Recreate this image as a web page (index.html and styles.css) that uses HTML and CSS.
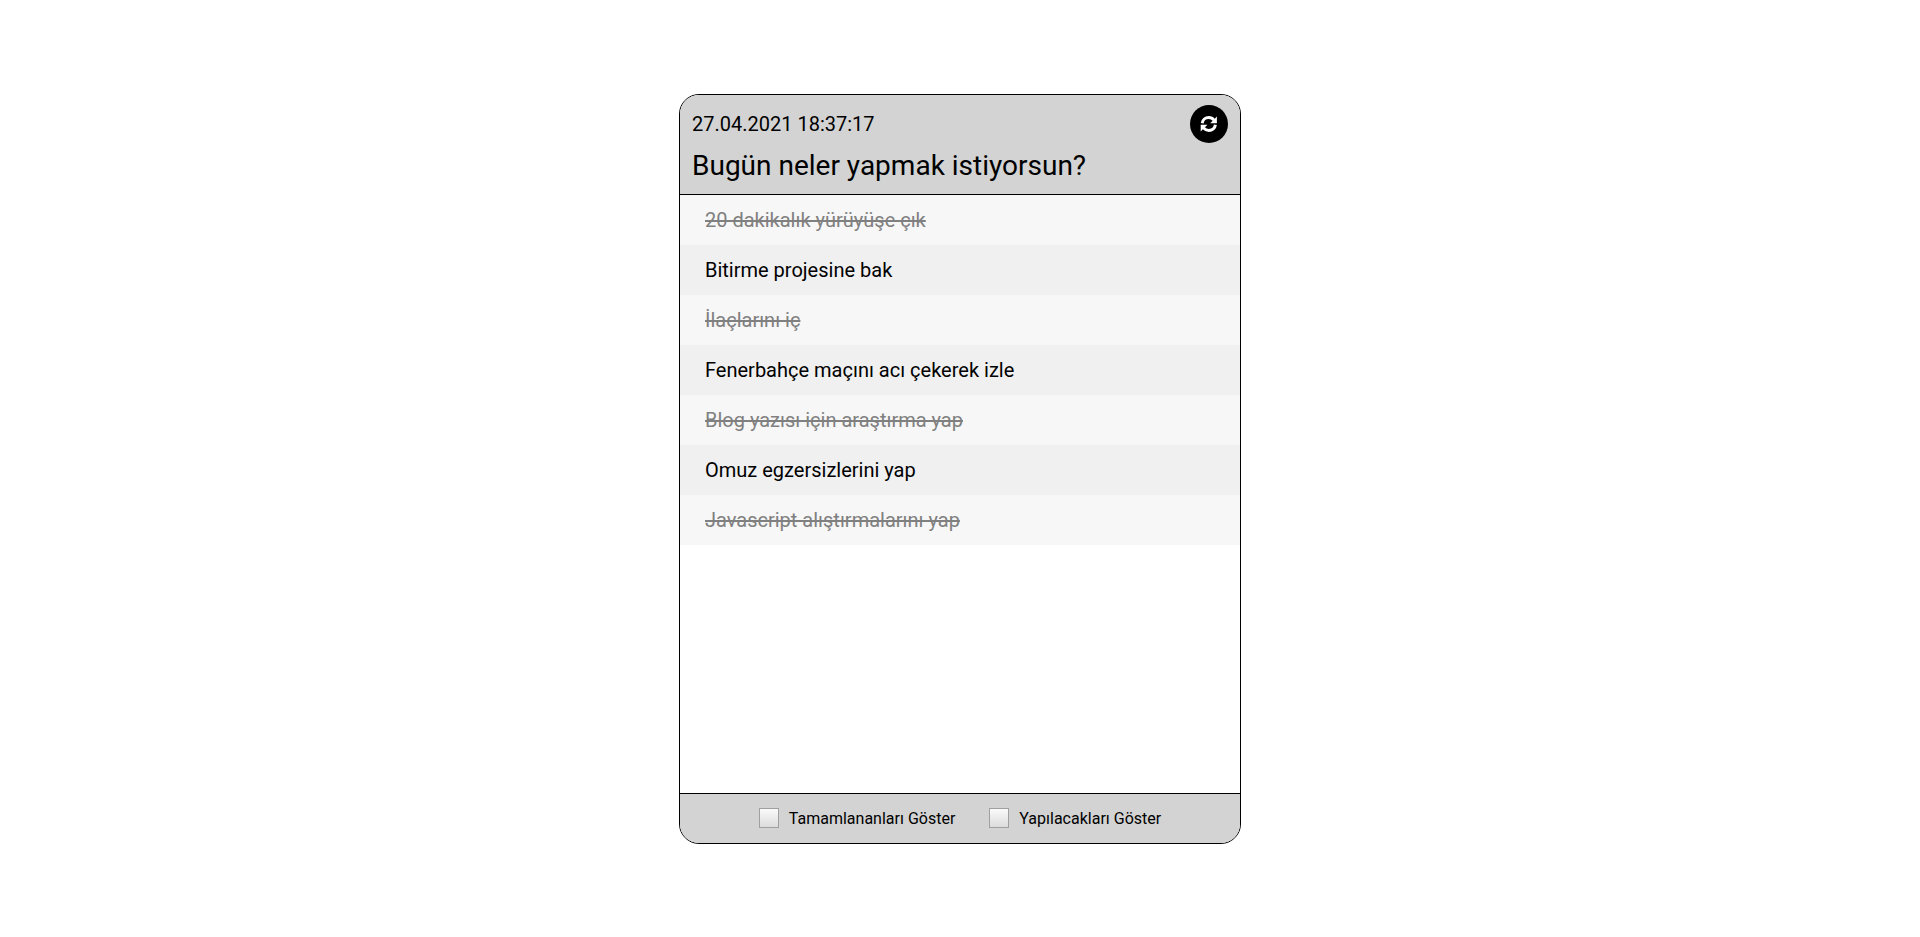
FILE: index.html
```html
<!DOCTYPE html>
<html lang="tr">
<head>
  <meta charset="utf-8">
  <meta name="viewport" content="width=device-width, initial-scale=1">
  <title>Yapılacaklar</title>
  <link rel="stylesheet" href="styles.css">
</head>
<body>
  <main class="card">
    <header class="card-header">
      <div class="header-top">
        <time class="clock" datetime="2021-04-27T18:37:17">27.04.2021 18:37:17</time>
        <button class="refresh" type="button" aria-label="Yenile">
          <svg class="refresh-icon" viewBox="0 0 18 18" aria-hidden="true">
            <path class="arc" d="M2.2 8.2C2.6 4.9 5.300 2.600 8.700 2.600C10.900 2.600 12.700 3.500 14 5.100"/>
            <path class="arc" d="M15.400 9.800C15 13.100 12.300 15.400 8.900 15.400C6.700 15.400 4.900 14.500 3.600 12.900"/>
            <path d="M16.900 1.500V8.200H10.200z"/>
            <path d="M.7 16.500V9.800H7.400z"/>
          </svg>
        </button>
      </div>
      <h1 class="title">Bugün neler yapmak istiyorsun?</h1>
    </header>
    <ul class="todos">
      <li class="todo done">20 dakikalık yürüyüşe çık</li>
      <li class="todo">Bitirme projesine bak</li>
      <li class="todo done">İlaçlarını iç</li>
      <li class="todo">Fenerbahçe maçını acı çekerek izle</li>
      <li class="todo done">Blog yazısı için araştırma yap</li>
      <li class="todo">Omuz egzersizlerini yap</li>
      <li class="todo done">Javascript alıştırmalarını yap</li>
    </ul>
    <footer class="card-footer">
      <label class="filter"><input class="check" type="checkbox">Tamamlananları Göster</label>
      <label class="filter"><input class="check" type="checkbox">Yapılacakları Göster</label>
    </footer>
  </main>
</body>
</html>
```
FILE: styles.css
```css
* {
  box-sizing: border-box;
}

body {
  display: flex;
  align-items: center;
  justify-content: center;
  min-height: 100vh;
  margin: 0;
  background: #fff;
  color: #000;
  font-family: Roboto, sans-serif;
}

.card {
  display: flex;
  flex-direction: column;
  width: 100%;
  max-width: 562px;
  min-height: 750px;
  overflow: hidden;
  border: 1px solid #000;
  border-radius: 20px;
}

.card-header {
  padding: 10px 12px;
  border-bottom: 1px solid #000;
  background: #d3d3d3;
}

.header-top {
  display: flex;
  align-items: center;
  justify-content: space-between;
}

.clock {
  font-size: 20px;
}

.refresh {
  display: flex;
  align-items: center;
  justify-content: center;
  width: 38px;
  height: 38px;
  padding: 0;
  border: 0;
  border-radius: 50%;
  background: #000;
  cursor: pointer;
}

.refresh-icon {
  width: 18px;
  height: 18px;
  fill: #fff;
}

.arc {
  fill: none;
  stroke: #fff;
  stroke-width: 3;
}

.title {
  margin: 5px 0 0;
  font-size: 28px;
  font-weight: 400;
  line-height: 36px;
}

.todos {
  flex: 1;
  margin: 0;
  padding: 0;
  list-style: none;
}

.todo {
  padding: 0 25px;
  background: #f7f7f7;
  font-size: 20px;
  line-height: 50px;
}

.todo:nth-child(even) {
  background: #f0f0f0;
}

.done {
  color: #808080;
  text-decoration: line-through;
}

.card-footer {
  display: flex;
  align-items: center;
  justify-content: center;
  gap: 34px;
  min-height: 50px;
  border-top: 1px solid #000;
  background: #d3d3d3;
}

.filter {
  display: flex;
  align-items: center;
  gap: 10px;
  font-size: 16px;
}

.check {
  width: 20px;
  height: 20px;
  margin: 0;
  appearance: none;
  border: 1px solid #a0a0a0;
  background: linear-gradient(#fafafa, #dcdcdc);
}

.check:checked {
  background: #333;
}
```
